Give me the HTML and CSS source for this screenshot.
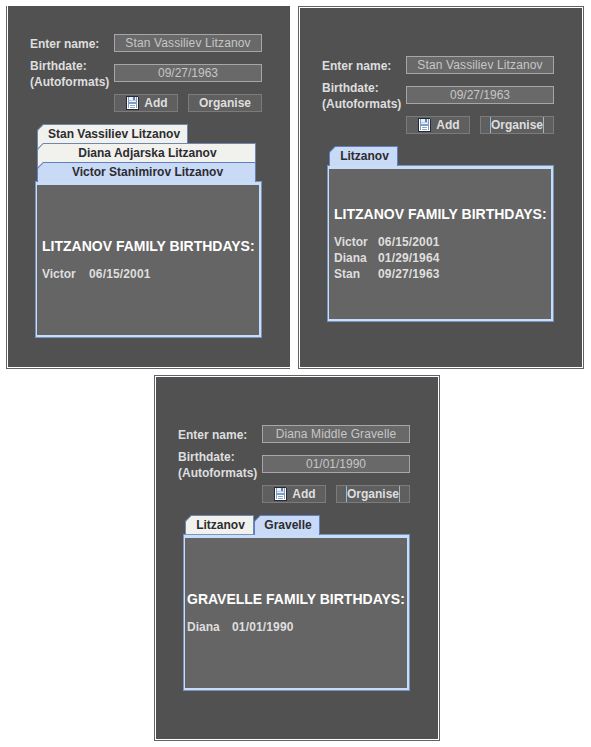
FILE: index.html
```html
<!DOCTYPE html>
<html lang="en">
<head>
<meta charset="utf-8">
<title>Family Birthdays</title>
<link rel="stylesheet" href="styles.css">
</head>
<body>
<svg class="defs" width="0" height="0" aria-hidden="true">
  <symbol id="disk" viewBox="0 0 13 14">
    <path fill="#252a36" d="M0 0h12v1h1v13H0z"/>
    <path fill="#fff" d="M1 1h11v12H1z"/>
    <path fill="#7f9cc4" d="M2 1h1v11H2zM10 1h1v11h-1zM2 6h9v2H2z"/>
    <path fill="#e8f1fb" d="M3 1h7v5H3z"/>
    <path fill="#5f7fad" d="M7 1h2v3H7z"/>
    <path fill="#b9cce4" d="M3 4h7v1H3z"/>
    <path fill="#fff" d="M3 8h7v5H3z"/>
    <path fill="#8ea6c6" d="M4 9h5v1H4zM4 11h5v1H4z"/>
  </symbol>
</svg>
<main class="board">
  <section class="window window-first">
    <form class="form">
      <label class="label">Enter name:</label>
      <div class="field"><span class="name-value">Stan Vassiliev Litzanov</span></div>
      <label class="label label-tall">Birthdate:<br>(Autoformats)</label>
      <div class="field">09/27/1963</div>
      <div class="buttons">
        <button type="button" class="button add"><svg class="icon"><use href="#disk"/></svg>Add</button>
        <button type="button" class="button organise"><span>Organise</span></button>
      </div>
    </form>
    <div class="tabs tabs-stacked">
      <div class="tab tab-short">Stan Vassiliev Litzanov</div>
      <div class="tab">Diana Adjarska Litzanov</div>
      <div class="tab tab-active">Victor Stanimirov Litzanov</div>
    </div>
    <div class="pane">
      <h2 class="title">LITZANOV FAMILY BIRTHDAYS:</h2>
      <dl class="list list-wide"><dt>Victor</dt><dd>06/15/2001</dd></dl>
    </div>
  </section>

  <section class="window window-second">
    <form class="form">
      <label class="label">Enter name:</label>
      <div class="field"><span class="name-value">Stan Vassiliev Litzanov</span></div>
      <label class="label label-tall">Birthdate:<br>(Autoformats)</label>
      <div class="field">09/27/1963</div>
      <div class="buttons">
        <button type="button" class="button add"><svg class="icon"><use href="#disk"/></svg>Add</button>
        <button type="button" class="button organise focused"><span>Organise</span></button>
      </div>
    </form>
    <div class="tabs">
      <div class="tab tab-active tab-litzanov">Litzanov</div>
    </div>
    <div class="pane">
      <h2 class="title">LITZANOV FAMILY BIRTHDAYS:</h2>
      <dl class="list"><dt>Victor</dt><dd>06/15/2001</dd><dt>Diana</dt><dd>01/29/1964</dd><dt>Stan</dt><dd>09/27/1963</dd></dl>
    </div>
  </section>

  <section class="window window-third">
    <form class="form">
      <label class="label">Enter name:</label>
      <div class="field"><span class="name-value">Diana Middle Gravelle</span></div>
      <label class="label label-tall">Birthdate:<br>(Autoformats)</label>
      <div class="field">01/01/1990</div>
      <div class="buttons">
        <button type="button" class="button add"><svg class="icon"><use href="#disk"/></svg>Add</button>
        <button type="button" class="button organise focused"><span>Organise</span></button>
      </div>
    </form>
    <div class="tabs">
      <div class="tab tab-litzanov">Litzanov</div>
      <div class="tab tab-active tab-gravelle">Gravelle</div>
    </div>
    <div class="pane">
      <h2 class="title">GRAVELLE FAMILY BIRTHDAYS:</h2>
      <dl class="list list-gravelle"><dt>Diana</dt><dd>01/01/1990</dd></dl>
    </div>
  </section>
</main>
</body>
</html>
```
FILE: styles.css
```css
* { box-sizing: border-box; }

body {
  margin: 0;
  background: #fff;
  font: bold 12px/16px "Liberation Sans", Arial, sans-serif;
  color: #dedede;
}

.defs { display: block; }

.board {
  display: grid;
  grid-template-columns: 286px 286px;
  gap: 6px;
  padding: 6px 0 0 6px;
}

.window {
  height: 363px;
  border: 1px solid #66606a;
  background: #515151;
  box-shadow: inset 0 0 0 1px #fff;
  padding: 49px 0 0 23px;
  white-space: nowrap;
}

.window-first {
  border-width: 0 0 1px 1px;
  box-shadow: inset 1px -1px #fff;
  width: 284px;
  padding-top: 28px;
}

.window-third {
  grid-column: 1 / 3;
  width: 286px;
  height: 366px;
  margin-left: 148px;
}

.form {
  display: grid;
  grid-template-columns: 84px 148px;
  grid-template-rows: repeat(3, 18px);
  row-gap: 12px;
}

.label { margin-top: 2px; }
.label-tall { margin-top: -6px; }

.field {
  border: 1px solid #aaa4aa;
  background: #696969;
  color: #c6c6c6;
  font-weight: normal;
  text-align: center;
}

.field { line-height: 17px; }
.name-value { letter-spacing: 0.12px; }

.buttons {
  grid-column: 2;
  display: flex;
  gap: 10px;
}

.button {
  display: flex;
  align-items: center;
  justify-content: center;
  height: 18px;
  padding: 0;
  border: 1px solid #7b7b7b;
  background: #5f5f5f;
  color: inherit;
  font: inherit;
}

.add { width: 64px; gap: 5px; padding-left: 2px; }
.organise { width: 74px; }
.focused span { box-shadow: -1px 0 #9cb8cd, 1px 0 #9cb8cd; }
.icon { width: 13px; height: 14px; }

.tabs {
  position: relative;
  z-index: 1;
  display: flex;
  height: 19px;
  margin: 12px 0 0 7px;
}

.tabs-stacked {
  flex-direction: column;
  width: 219px;
  height: 57px;
}

.tab {
  position: relative;
  isolation: isolate;
  flex: none;
  height: 19px;
  padding: 2px 0 0 2px;
  background: #6f87ad;
  color: #2c2c30;
  text-align: center;
  clip-path: polygon(6px 0, 100% 0, 100% 100%, 0 100%, 0 6px);
}

.tab::before {
  content: "";
  position: absolute;
  z-index: -1;
  inset: 1px 1px 0;
  background: #f1f1ee;
  clip-path: polygon(5.4px 0, 100% 0, 100% 100%, 0 100%, 0 5.4px);
}

.tab-active { background: #5f80bd; height: 20px; }
.tab-active::before { background: #c9daf6; }
.tabs-stacked .tab { height: 26px; margin-bottom: -7px; }
.tabs-stacked .tab-active { height: 20px; }
.tab-short { width: 151px; padding-left: 11px; text-align: left; }
.tab-litzanov { width: 69px; }
.tab-gravelle { width: 66px; }

.pane {
  position: relative;
  width: 227px;
  height: 157px;
  margin-left: 5px;
  border: solid #c9dcf8;
  border-width: 4px 3px 3px 2px;
  background: #656565;
  padding: 37px 0 0 5px;
}

/* outer edge of the pane frame */
.pane::before {
  content: "";
  position: absolute;
  inset: -4px -3px -3px -2px;
  border: 1px solid #7895c0;
}

.title {
  margin: 0;
  color: #fff;
  font-size: 14px;
  line-height: 16px;
}

.list {
  display: grid;
  grid-template-columns: 44px auto;
  margin: 12px 0 0;
}

.list dd { margin: 0; letter-spacing: 0.15px; }
.list-wide { grid-template-columns: 47px auto; }
.list-gravelle { grid-template-columns: 45px auto; }

.window-third .pane { padding-left: 2px; padding-top: 53px; }
.window-first .pane { padding-top: 53px; }
```
